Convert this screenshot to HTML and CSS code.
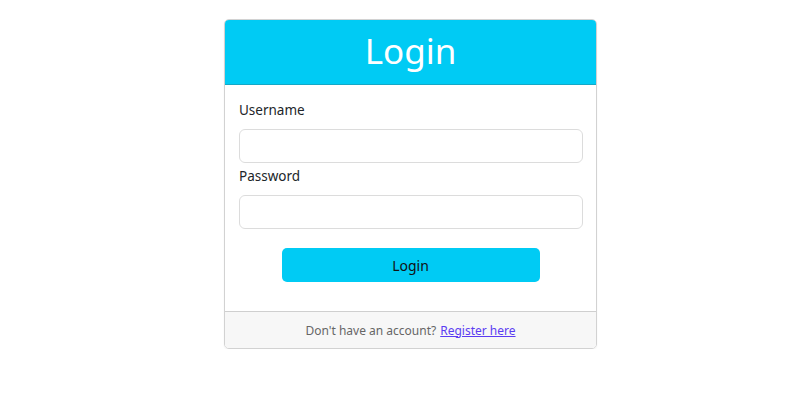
FILE: index.html
```html
<!DOCTYPE html>
<html lang="en">
<head>
<meta charset="utf-8">
<title>Login</title>
<link rel="stylesheet" href="styles.css">
</head>
<body>
<div class="page">
  <div class="card">
    <div class="card-header">
      <h1 class="title">Login</h1>
    </div>
    <form class="card-body">
      <label class="label" for="username">Username</label>
      <input class="input" id="username" type="text">
      <label class="label label-second" for="password">Password</label>
      <input class="input" id="password" type="password">
      <div class="actions">
        <button class="btn" type="button">Login</button>
      </div>
    </form>
    <div class="card-footer">
      Don't have an account? <a class="link" href="#">Register here</a>
    </div>
  </div>
</div>
</body>
</html>
```
FILE: styles.css
```css
html, body {
  margin: 0;
  padding: 0;
  background: #fff;
}
body {
  font-family: "Noto Sans", "Open Sans", sans-serif;
  color: #212529;
}
.page {
  padding: 19px 0 0 224px;
}
.card {
  width: 371px;
  border: 1px solid #d2d2d2;
  border-radius: 5px;
  overflow: hidden;
  box-shadow: 0 1px 2px rgba(0,0,0,0.06);
}
.card-header {
  background: #00cbf4;
  height: 64px;
  border-bottom: 1px solid #14a8c6;
  display: flex;
  align-items: center;
  justify-content: center;
}
.title {
  margin: 0;
  color: #fff;
  font-weight: 400;
  font-size: 35px;
  line-height: 1;
  padding-bottom: 4px;
}
.card-body {
  display: flex;
  flex-direction: column;
  padding: 14px 13px 29px 14px;
}
.label {
  font-size: 13.5px;
  line-height: 22px;
  margin-bottom: 8px;
}
.label-second {
  margin-top: 2px;
}
.input {
  height: 34px;
  box-sizing: border-box;
  border: 1px solid #dcdcdc;
  border-radius: 6px;
  margin: 0;
  font: inherit;
}
.actions {
  display: flex;
  justify-content: center;
  margin-top: 19px;
  padding-right: 1px;
}
.btn {
  width: 258px;
  height: 34px;
  background: #00cbf4;
  border: none;
  border-radius: 5px;
  color: #111;
  font-family: inherit;
  font-size: 14px;
  padding: 0;
}
.card-footer {
  background: #f7f7f7;
  border-top: 1px solid #cfcfcf;
  height: 36px;
  display: flex;
  align-items: center;
  justify-content: center;
  font-size: 12px;
  color: #666;
  gap: 4px;
}
.link {
  color: #5b3cf2;
}
```
